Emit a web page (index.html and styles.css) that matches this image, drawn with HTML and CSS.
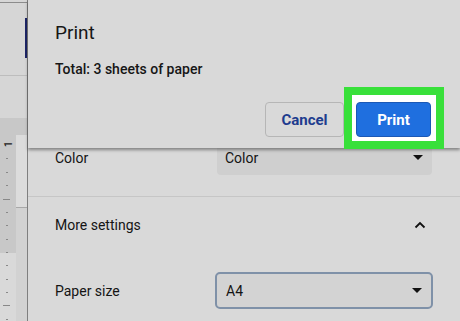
FILE: index.html
```html
<!DOCTYPE html>
<html lang="en">
<head>
<meta charset="utf-8">
<title>Print</title>
<link rel="stylesheet" href="styles.css">
</head>
<body>
<div class="page">
  <aside class="ruler">
    <svg width="27" height="321" viewBox="0 0 27 321">
      <rect x="0" y="0" width="27" height="321" fill="#d6d6d6"/>
      <rect x="0" y="2" width="27" height="1" fill="#8c8c8c"/>
      <rect x="0" y="75" width="27" height="1" fill="#bdbdbd"/>
      <rect x="25" y="18" width="2" height="40" fill="#1c2466"/>
      <rect x="0" y="118" width="27" height="135" fill="#c8c8c8"/>
      <rect x="16" y="135" width="11" height="72" fill="#dcdcdc"/>
      <rect x="16" y="207" width="11" height="1" fill="#a8a8a8"/>
      <rect x="16" y="208" width="11" height="113" fill="#d2d2d2"/>
      <rect x="0" y="253" width="16" height="68" fill="#d9d9d9"/>
      <text x="8" y="144" transform="rotate(-90 8 144)" font-family="Roboto, sans-serif" font-size="11" font-weight="500" fill="#222" text-anchor="middle" dominant-baseline="central">1</text>
      <g fill="#888">
        <rect x="6" y="158" width="2" height="1"/>
        <rect x="6" y="172" width="2" height="1"/>
        <rect x="6" y="185" width="2" height="1"/>
        <rect x="3" y="199" width="7" height="1"/>
        <rect x="6" y="212" width="2" height="1"/>
        <rect x="6" y="225" width="2" height="1"/>
        <rect x="6" y="239" width="2" height="1"/>
        <rect x="6" y="252" width="2" height="1"/>
        <rect x="6" y="265" width="2" height="1"/>
        <rect x="6" y="279" width="2" height="1"/>
        <rect x="6" y="292" width="2" height="1"/>
        <rect x="3" y="305" width="7" height="1"/>
        <rect x="6" y="319" width="2" height="1"/>
      </g>
    </svg>
  </aside>
  <main class="dialog">
    <header class="dialog-head">
      <h1 class="title">Print</h1>
      <p class="summary">Total: 3 sheets of paper</p>
      <div class="actions">
        <button class="btn btn-cancel">Cancel</button>
        <span class="highlight"><button class="btn btn-print">Print</button></span>
      </div>
    </header>
    <section class="settings">
      <div class="row row-color">
        <span class="label">Color</span>
        <div class="select select-flat"><span>Color</span><span class="caret"></span></div>
      </div>
      <div class="row row-more">
        <span class="label">More settings</span>
        <svg class="chev" width="12" height="8" viewBox="0 0 12 8"><path d="M1.5 6.5 L6 2 L10.5 6.5" fill="none" stroke="#111" stroke-width="1.8"/></svg>
      </div>
      <div class="row row-paper">
        <span class="label">Paper size</span>
        <div class="select select-outlined"><span>A4</span><span class="caret"></span></div>
      </div>
    </section>
  </main>
</div>
</body>
</html>
```
FILE: styles.css
```css
* { box-sizing: border-box; }
html, body { margin: 0; padding: 0; }
body {
  width: 460px;
  height: 321px;
  overflow: hidden;
  background: #d9d9d9;
  font-family: Roboto, "Noto Sans", sans-serif;
  color: #141414;
}
.page { display: flex; height: 321px; }
.ruler {
  width: 28px;
  flex: none;
  border-right: 1px solid #7f7f7f;
  display: flex;
}
.ruler svg { display: block; }
.dialog {
  flex: 1;
  display: flex;
  flex-direction: column;
  background: #d9d9d9;
}
.dialog-head {
  position: relative;
  z-index: 2;
  height: 148px;
  padding: 21px 16px 0 27px;
  background: #d9d9d9;
  box-shadow: 0 2px 3px rgba(0, 0, 0, 0.4);
  display: flex;
  flex-direction: column;
}
.title {
  margin: 0;
  font-size: 19px;
  line-height: 24px;
  font-weight: 400;
  color: #161616;
}
.summary {
  margin: 15px 0 0;
  font-size: 14px;
  line-height: 18px;
  font-weight: 500;
  color: #161616;
}
.actions {
  margin-top: 9px;
  display: flex;
  justify-content: flex-end;
  align-items: flex-start;
}
.btn {
  font-family: Roboto, "Noto Sans", sans-serif;
  font-size: 15px;
  font-weight: 700;
  height: 35px;
  border-radius: 4px;
  padding: 0;
}
.btn-cancel {
  margin-top: 15px;
  width: 79px;
  background: #d9d9d9;
  border: 1px solid #b6b6b6;
  color: #1d3c8e;
}
.highlight {
  display: flex;
  background: #fff;
  border: 8px solid #38e03a;
  padding: 7px 5px 4px 4px;
}
.btn-print {
  width: 75px;
  background: #1f6fdf;
  border: 1px solid #1b58b5;
  color: #fff;
}
.settings {
  padding: 0 28px 0 27px;
  font-size: 14px;
}
.row {
  display: flex;
  align-items: center;
}
.label { width: 162px; flex: none; }
.row-color {
  margin-top: -10px;
  height: 59px;
  align-items: flex-start;
  border-bottom: 1px solid #c6c6c6;
  margin-left: -27px;
  margin-right: -28px;
  padding: 2px 28px 0 27px;
}
.row-color .label { line-height: 36px; }
.select {
  flex: 1;
  display: flex;
  align-items: center;
  justify-content: space-between;
  padding: 0 9px 0 8px;
}
.select-flat {
  height: 35px;
  background: #cfcfcf;
  border-radius: 4px;
}
.select-outlined {
  height: 37px;
  background: #d3d3d3;
  border: 2px solid #7f91a8;
  border-radius: 5px;
  margin-left: -2px;
  padding-left: 9px;
  margin-right: -1px;
}
.caret {
  width: 0;
  height: 0;
  border-left: 5px solid transparent;
  border-right: 5px solid transparent;
  border-top: 5px solid #111;
}
.row-more {
  height: 56px;
  justify-content: space-between;
}
.chev { margin-right: 6px; }
.row-paper {
  padding-top: 19px;
}
```
